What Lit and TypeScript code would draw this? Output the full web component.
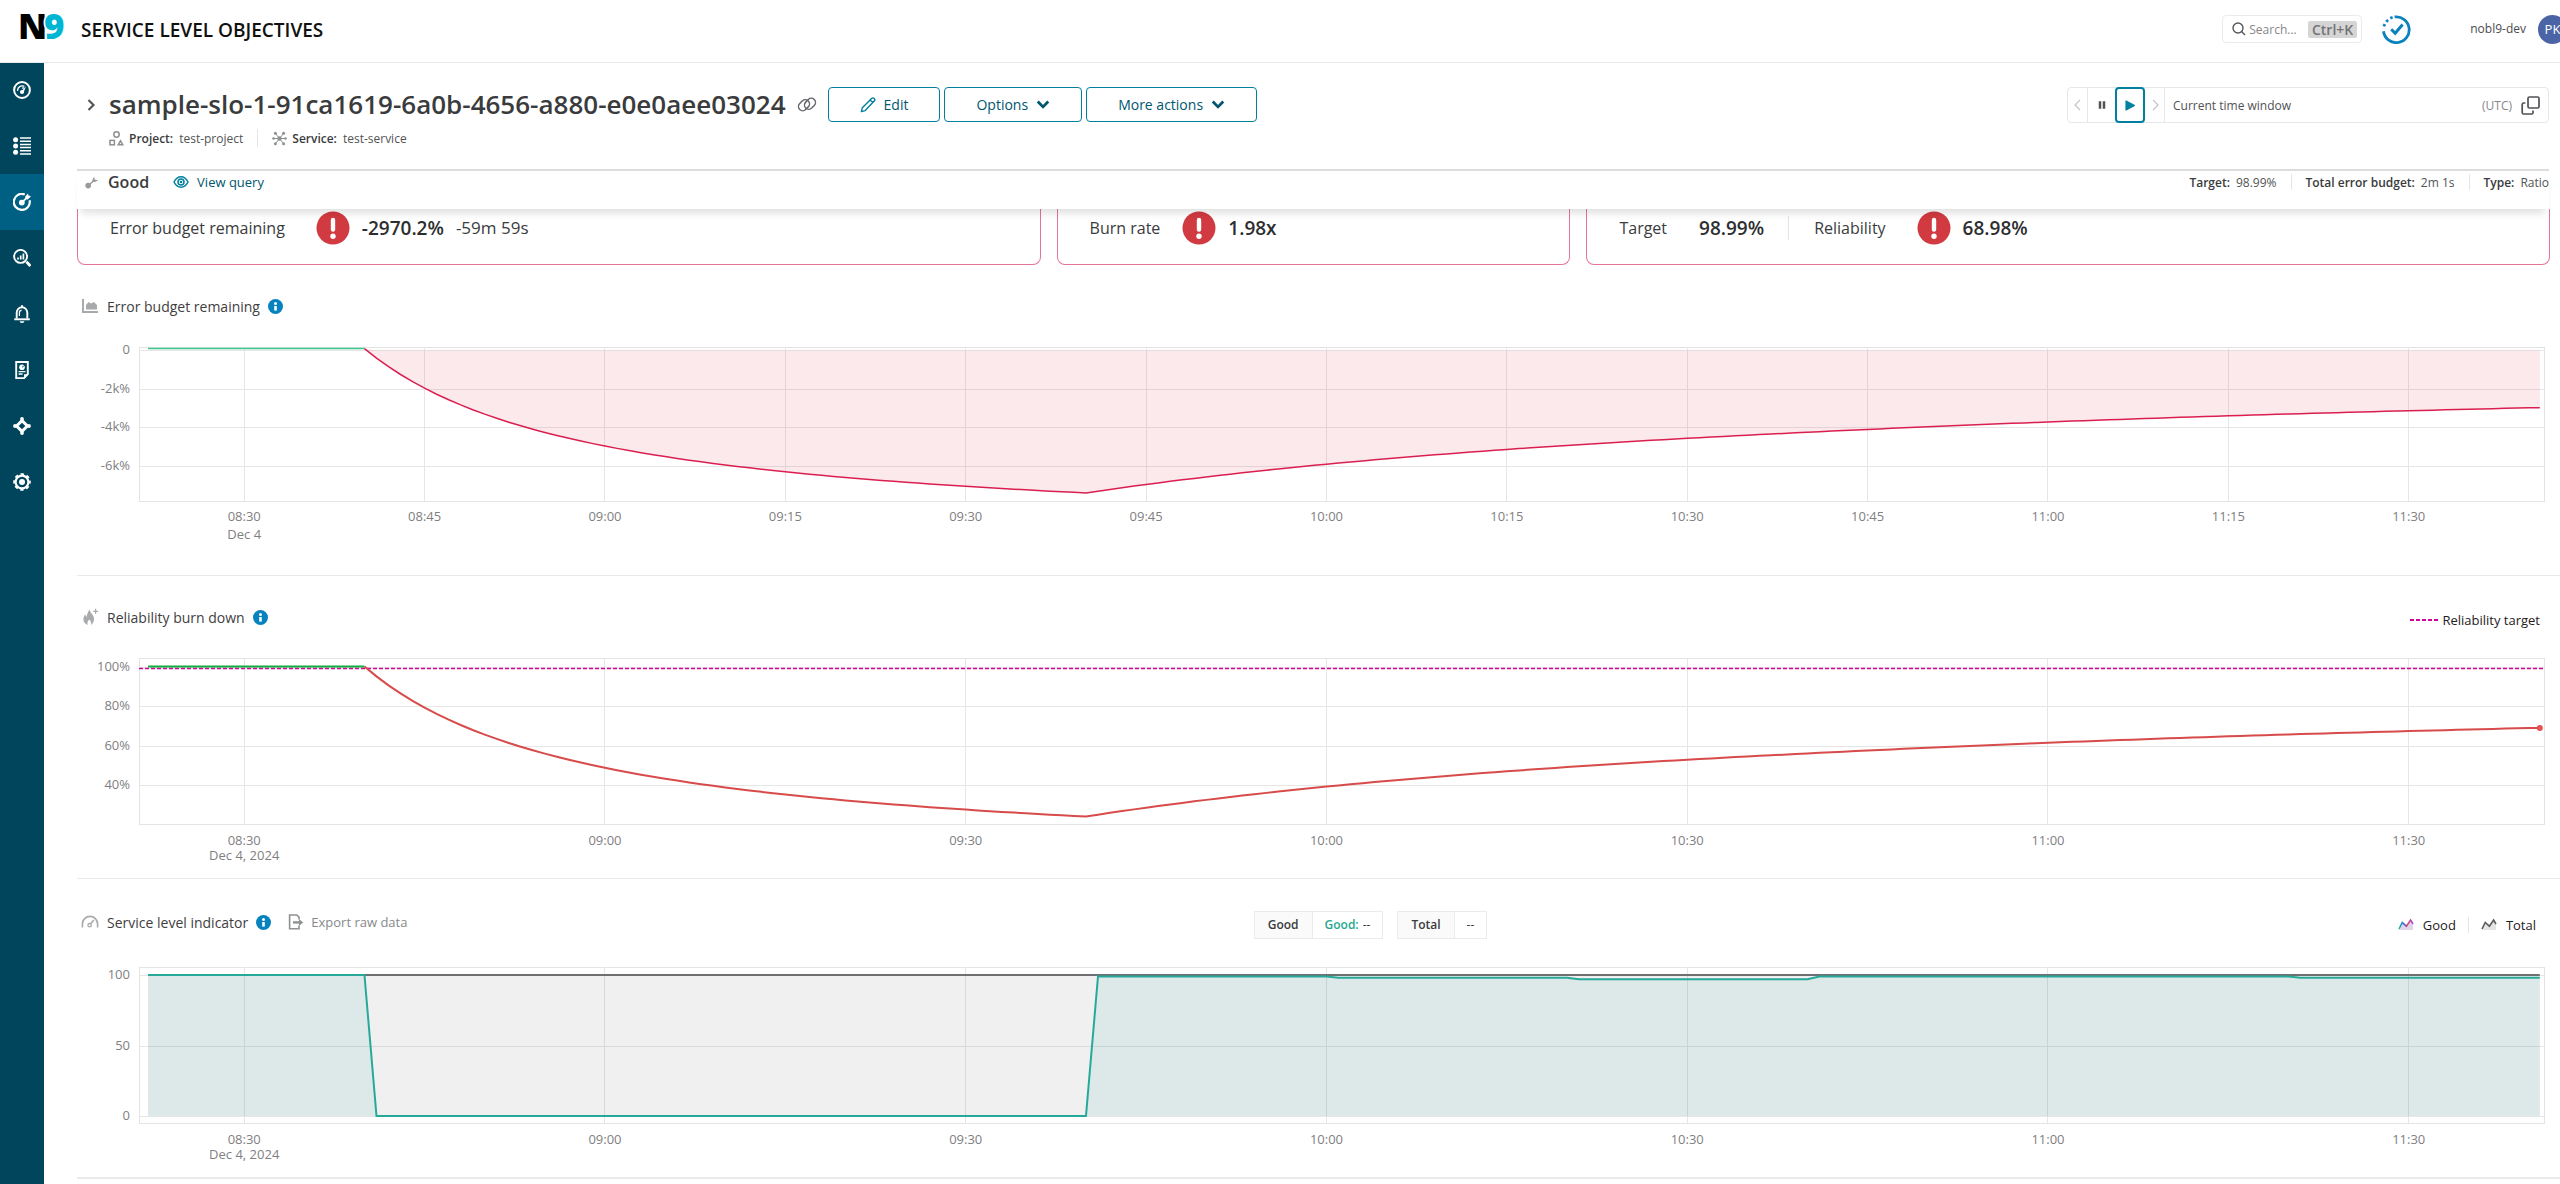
import { LitElement, html, svg, css, nothing } from "lit";
import { customElement, property } from "lit/decorators.js";

const START = 21.25;
const SPAN = 200;
const clock = (m: number) =>
  `${String(8 + Math.floor(m / 60)).padStart(2, "0")}:${String(m % 60).padStart(2, "0")}`;
const px = (m: number) => ((m - START) / SPAN) * 1000;
const pct = (m: number) => `${px(m) / 10}%`;

/* Share of good events recorded in each minute after 08:00. */
const goodAt = (m: number) => {
  if (m <= 40) return 100;
  if (m <= 100) return 0;
  if (m <= 120) return 99;
  if (m <= 140) return 98;
  if (m <= 160) return 97;
  if (m <= 200) return 99;
  return 98;
};

const minutes: number[] = [];
for (let m = 22; m <= 220; m++) minutes.push(m);
minutes.push(220.9);

const TARGET = 98.99;
const reliability = minutes.map((m) => {
  const total = m - 21;
  let good = 0;
  for (let k = 22; k <= m; k++) good += goodAt(k);
  return { m, v: good / Math.max(Math.floor(total), 1) };
});
const budget = reliability.map(({ m, v }) => ({ m, v: ((v - TARGET) / (100 - TARGET)) * 100 }));

type Point = { m: number; v: number };
const trace = (points: Point[], y: (v: number) => number) =>
  points.map((p, i) => `${i ? "L" : "M"}${px(p.m).toFixed(2)} ${y(p.v).toFixed(2)}`).join("");

const icons = {
  gauge: svg`<circle cx="9" cy="9" r="7.9" fill="none" stroke="currentColor" stroke-width="2"/><path d="M4.6 9.2a4.5 4.5 0 0 1 6.2-4" fill="none" stroke="currentColor" stroke-width="1.4" stroke-linecap="round"/><circle cx="9" cy="11" r="2.1" fill="currentColor"/><path d="M8.2 10.6 13 5.2 10.6 11.6z" fill="currentColor"/><path d="M9 7.2l2.2-.4" stroke="currentColor" stroke-width="1.2"/>`,
  list: svg`<circle cx="2.6" cy="2.8" r="2.5" fill="currentColor"/><circle cx="2.6" cy="9" r="2.5" fill="currentColor"/><circle cx="2.6" cy="15.2" r="2.5" fill="currentColor"/><path d="M7 1h11M7 4.2h11M7 7.4h11M7 10.6h11M7 13.8h11M7 17h11" stroke="currentColor" stroke-width="1.5"/>`,
  target: svg`<path d="M11.8 1.5A8 8 0 1 0 16.6 7.2" fill="none" stroke="currentColor" stroke-width="2.2"/><circle cx="8.8" cy="9.6" r="2.9" fill="currentColor"/><path d="M9 9.4 14 4.6" stroke="currentColor" stroke-width="1.8"/><path d="M12.2 3.6 15 .4l.5 2.2 2.5.6-3.2 3.2-2.3-.3z" fill="currentColor"/>`,
  analyze: svg`<circle cx="7.6" cy="7.4" r="6.5" fill="none" stroke="currentColor" stroke-width="1.9"/><path d="M5 8.4v2.2M7.7 6.4v4.2M10.4 4.6v6" stroke="currentColor" stroke-width="1.7"/><path d="M13.4 12.8l4 4.2" stroke="currentColor" stroke-width="2.8"/>`,
  bell: svg`<path d="M9 .2v2" stroke="currentColor" stroke-width="2"/><path d="M3.7 13.4V7.6a5.3 5.3 0 0 1 10.6 0v5.8" fill="none" stroke="currentColor" stroke-width="1.9"/><path d="M1.2 14.3h15.6" stroke="currentColor" stroke-width="1.9"/><path d="M6.4 11V8a2.7 2.7 0 0 1 2.2-2.8" fill="none" stroke="currentColor" stroke-width="1.2"/><path d="M6.6 16.2h4.8a2.4 1.8 0 0 1-4.8 0z" fill="currentColor"/>`,
  report: svg`<path d="M3.2 1h11.6v12.2L11 17.2H3.2z" fill="none" stroke="currentColor" stroke-width="1.9"/><path d="M11 17.6v-4.4h4.4z" fill="currentColor"/><circle cx="9" cy="6.3" r="2.8" fill="currentColor"/><path d="M9 6.3 12 4" stroke="#00455b" stroke-width=".9"/><path d="M5.6 10.6h6.8M5.6 13h4" stroke="currentColor" stroke-width="1.3"/>`,
  nodes: svg`<path d="M9 3.6 14.4 9 9 14.4 3.6 9z" fill="none" stroke="currentColor" stroke-width="3"/><circle cx="9" cy="2" r="1.9" fill="currentColor"/><circle cx="9" cy="16" r="1.9" fill="currentColor"/><circle cx="2" cy="9" r="1.9" fill="currentColor"/><circle cx="16" cy="9" r="1.9" fill="currentColor"/>`,
  gear: svg`<circle cx="9" cy="9" r="6.4" fill="none" stroke="currentColor" stroke-width="2.2"/><circle cx="9" cy="9" r="7.8" fill="none" stroke="currentColor" stroke-width="2" stroke-dasharray="3.4 2.73" stroke-dashoffset="1.7"/><circle cx="9" cy="9" r="3" fill="currentColor"/>`,
};

const icon = (body: unknown, size = 18, box = 18) =>
  html`<svg class="icon" aria-hidden="true" width=${size} height=${size} viewBox="0 0 ${box} ${box}">${body}</svg>`;

const caret = svg`<path d="M1.5 3 6 7.6 10.5 3" fill="none" stroke="currentColor" stroke-width="2.4"/>`;
const alertIcon = icon(
  svg`<circle cx="17" cy="17" r="16.5" fill="#d13a41"/><path d="M17 9v9.6" stroke="#fff" stroke-width="4.4" stroke-linecap="round"/><circle cx="17" cy="25.2" r="2.7" fill="#fff"/>`,
  34,
  34,
);

const base = css`
  * {
    box-sizing: border-box;
  }
  a {
    color: inherit;
    text-decoration: none;
  }
  button {
    font: inherit;
    color: inherit;
    background: none;
    border: 0;
    padding: 0;
    cursor: pointer;
  }
  .icon {
    display: block;
    flex: none;
  }
`;

@customElement("top-bar")
class TopBar extends LitElement {
  static styles = [
    base,
    css`
      :host {
        display: block;
      }
      .bar {
        display: flex;
        align-items: center;
        height: 63px;
        padding: 0 0 4px 20px;
        border-bottom: 1px solid #e9eaec;
        overflow: hidden;
      }
      .logo {
        display: block;
        overflow: visible;
      }
      .mark {
        font-family: "Open Sans", sans-serif;
        font-weight: 800;
        font-size: 35px;
      }
      h1 {
        margin: 1px 0 0 15px;
        font-size: 19px;
        line-height: 24px;
        font-weight: 600;
        color: #111;
        flex: 1;
        white-space: nowrap;
      }
      .search {
        display: flex;
        align-items: center;
        width: 140px;
        height: 28px;
        padding: 0 4px 0 9px;
        border: 1px solid #ebebed;
        border-radius: 4px;
        color: #55575a;
      }
      .search input {
        flex: 1;
        min-width: 0;
        margin-left: 3px;
        padding: 0;
        border: 0;
        outline: 0;
        font: inherit;
        font-size: 12px;
      }
      .search input::placeholder {
        color: #858789;
      }
      kbd {
        padding: 0 4px;
        border-radius: 2px;
        background: #d5d5d6;
        color: #737476;
        font: 600 14px/17px "Open Sans", sans-serif;
      }
      .done {
        margin: 0 59px 0 20px;
      }
      .org {
        font-size: 12px;
        line-height: 18px;
        color: #4a4b4d;
        margin: 0 12px 1px 0;
      }
      .avatar {
        flex: none;
        width: 29px;
        height: 29px;
        margin-right: -7px;
        border-radius: 50%;
        background: #4a64a6;
        color: #fff;
        font-size: 13px;
      }
    `,
  ];
  render() {
    return html`<header class="bar">
      <a href="#home" aria-label="N9">
        <svg class="logo" width="46" height="34" viewBox="0 0 46 34" aria-hidden="true">
          <text class="mark" x="-2" y="27" fill="#000">N</text>
          <text class="mark" x="24" y="27" fill="#00b6d3" stroke="#fff" stroke-width="3" paint-order="stroke">9</text>
        </svg>
      </a>
      <h1>SERVICE LEVEL OBJECTIVES</h1>
      <label class="search">
        ${icon(svg`<circle cx="6" cy="6" r="5" fill="none" stroke="currentColor" stroke-width="1.4"/><path d="M9.6 9.6 13 13" stroke="currentColor" stroke-width="1.4"/>`, 14, 14)}
        <input type="text" aria-label="Search" placeholder="Search..." />
        <kbd>Ctrl+K</kbd>
      </label>
      <button class="done" aria-label="Status">
        ${icon(svg`<path d="M13.3 1.9A12.9 12.9 0 1 1 1.4 15.6" fill="none" stroke="#0a82bd" stroke-width="2.8" transform="rotate(-3 14.5 14.5)"/><path d="M1.9 11.4 a13 13 0 0 1 .9 -2.3M4.3 6.8a13 13 0 0 1 1.8-1.8M8.3 3.3a13 13 0 0 1 2.3-.9" fill="none" stroke="#0a82bd" stroke-width="2.8"/><path d="M9.2 14.2l4 4L20.6 9.6" fill="none" stroke="#0a82bd" stroke-width="3"/>`, 29, 29)}
      </button>
      <span class="org">nobl9-dev</span>
      <button class="avatar">PK</button>
    </header>`;
  }
}

@customElement("side-nav")
class SideNav extends LitElement {
  static styles = [
    base,
    css`
      :host {
        display: block;
        width: 44px;
        background: #00455b;
      }
      nav {
        margin-top: -1px;
      }
      .link {
        display: flex;
        align-items: center;
        justify-content: center;
        height: 56px;
        color: #fff;
      }
      .link.on {
        background: #006084;
      }
    `,
  ];
  render() {
    const items: [string, unknown][] = [
      ["Dashboards", icons.gauge],
      ["Catalog", icons.list],
      ["Objectives", icons.target],
      ["Analysis", icons.analyze],
      ["Alerts", icons.bell],
      ["Reports", icons.report],
      ["Integrations", icons.nodes],
      ["Settings", icons.gear],
    ];
    return html`<nav>
      ${items.map(
        ([name, body], i) =>
          html`<a class="link ${i === 2 ? "on" : ""}" href="#${name.toLowerCase()}" aria-label=${name}>${icon(body)}</a>`,
      )}
    </nav>`;
  }
}

interface AxisLabel {
  y: number;
  text: string;
}

@customElement("time-chart")
class TimeChart extends LitElement {
  @property({ attribute: false }) plot = 154;
  @property({ attribute: false }) step = 30;
  @property({ attribute: false }) labels: AxisLabel[] = [];
  @property({ attribute: false }) dateText = "";
  @property({ attribute: false }) tickGap = 21;
  @property({ attribute: false }) dateGap = 15;
  @property({ attribute: false }) body: unknown = nothing;
  @property({ attribute: false }) overlay: unknown = nothing;
  @property({ attribute: false }) tall = 200;

  static styles = [
    base,
    css`
      :host {
        display: block;
        padding: 0 16px 0 62px;
      }
      .chart {
        display: block;
        width: 100%;
        overflow: visible;
      }
      .grid {
        stroke: #e6e6e7;
        shape-rendering: crispEdges;
      }
      .frame {
        fill: none;
        stroke: #e4e4e5;
        shape-rendering: crispEdges;
      }
      .tick {
        font: 12px "Open Sans", sans-serif;
        font-size: 13px;
        fill: #7f8082;
      }
      .mid {
        text-anchor: middle;
      }
      .end {
        text-anchor: end;
      }
      .series path {
        vector-effect: non-scaling-stroke;
      }
    `,
  ];
  render() {
    const ticks: number[] = [];
    for (let m = 30; m <= 210; m += this.step) ticks.push(m);
    return html`<svg class="chart" height=${this.tall}>
      <rect class="frame" x="0" y="0" width="100%" height=${this.plot} />
      ${this.labels.map(
        (l) => svg`<line class="grid" x1="0" x2="100%" y1=${l.y} y2=${l.y} />
          <text class="tick end" x="-9" y=${l.y + 4}>${l.text}</text>`,
      )}
      ${ticks.map(
        (m) => svg`<line class="grid" x1=${pct(m)} x2=${pct(m)} y1="0" y2=${this.plot} />
          <text class="tick mid" x=${pct(m)} y=${this.plot + this.tickGap}>${clock(m)}</text>`,
      )}
      <text class="tick mid" x=${pct(30)} y=${this.plot + this.tickGap + this.dateGap}>${this.dateText}</text>
      <svg class="series" width="100%" height=${this.plot} viewBox="0 0 1000 ${this.plot}" preserveAspectRatio="none">
        ${this.body}
      </svg>
      ${this.overlay}
    </svg>`;
  }
}

@customElement("app-root")
class AppRoot extends LitElement {
  static styles = [
    base,
    css`
      :host {
        display: block;
        min-height: 100vh;
        background: #fff;
        color: #3a3b3d;
        font-family: "Open Sans", sans-serif;
        overflow-x: clip;
      }
      .shell {
        display: flex;
        min-height: calc(100vh - 63px);
      }
      main {
        flex: 1;
        min-width: 0;
        padding: 24px 0 0 33px;
      }
      .top,
      .meta,
      .status,
      .facts,
      .title,
      .legend,
      .head,
      .stats,
      .card {
        display: flex;
        align-items: center;
      }
      .top {
        margin-right: 11px;
        height: 36px;
      }
      .expand {
        margin: 0 12px 0 8px;
      }
      h2 {
        margin: 0;
        padding-bottom: 3px;
        font-size: 26px;
        line-height: 32px;
        font-weight: 600;
        white-space: nowrap;
      }
      .copy {
        margin: 0 11px;
        color: #66686b;
      }
      .actions {
        display: flex;
        align-self: flex-start;
        gap: 4px;
        margin-right: auto;
      }
      .action {
        display: flex;
        align-items: center;
        justify-content: center;
        gap: 8px;
        height: 35px;
        padding: 0 31px;
        border: 1px solid #00809e;
        border-radius: 4px;
        color: #00566f;
        font-size: 14px;
        line-height: 20px;
        white-space: nowrap;
      }
      .window {
        display: flex;
        height: 36px;
        width: 482px;
        border: 1px solid #e6e7e9;
        border-radius: 4px;
        color: #505255;
      }
      .nav {
        display: grid;
        place-items: center;
        width: 19px;
        color: #c3c4c6;
      }
      .pause {
        width: 28px;
        border-left: 1px solid #e6e7e9;
        color: #505255;
      }
      .play {
        width: 30px;
        margin: -1px 0;
        border: 2px solid #00809e;
        border-radius: 4px;
        color: #00809e;
      }
      .range {
        display: flex;
        flex: 1;
        align-items: center;
        gap: 9px;
        padding: 0 8px;
        border-left: 1px solid #e6e7e9;
        font-size: 12px;
        text-align: left;
      }
      .range span:first-child {
        flex: 1;
      }
      .zone {
        color: #85878a;
      }
      .meta {
        margin: 6px 0 22px 32px;
        height: 18px;
        font-size: 12px;
        color: #515355;
      }
      .meta b,
      .facts b {
        margin: 0 6px 0 0;
        font-weight: 600;
        color: #3a3b3d;
      }
      .meta .icon {
        margin-right: 5px;
        color: #8d8f91;
      }
      .sep {
        align-self: stretch;
        width: 1px;
        margin: 0 14px;
        background: #e4e5e7;
      }
      .status {
        position: relative;
        z-index: 1;
        height: 40px;
        margin-right: 11px;
        padding: 0 0 16px 8px;
        border-top: 2px solid #dcdddf;
        background: #fff;
        box-shadow: 0 8px 8px -4px rgba(0, 0, 0, 0.13);
      }
      h3 {
        margin: 0 24px 0 10px;
        font-size: 16px;
        line-height: 22px;
        font-weight: 600;
      }
      .query {
        display: flex;
        align-items: center;
        gap: 8px;
        margin-right: auto;
        font-size: 13px;
        line-height: 18px;
        color: #00566f;
      }
      .facts {
        height: 16px;
        font-size: 12px;
        color: #515355;
      }
      .cards {
        display: grid;
        grid-template-columns: 15fr 8fr 15fr;
        gap: 16px;
        margin-right: 10px;
      }
      .card {
        height: 56px;
        padding: 0 32px 18px;
        border: 1px solid #e57595;
        border-top: 0;
        border-radius: 0 0 8px 8px;
        font-size: 16px;
        white-space: nowrap;
      }
      .card strong {
        font-size: 19px;
        font-weight: 600;
        color: #2d2e30;
      }
      .card .icon {
        margin: 0 12px 0 31px;
      }
      .card .near {
        margin-left: 22px;
        display: flex;
      }
      .card .near .icon {
        margin-left: 0;
      }
      .card .time {
        margin-left: 12px;
        font-size: 17px;
      }
      .card .value {
        margin-left: 32px;
      }
      .card .sep {
        height: 24px;
        align-self: center;
        margin: 0 25px 0 24px;
      }
      section {
        padding: 30px 0 16px;
        border-bottom: 1px solid #e9eaeb;
      }
      .head {
        align-items: flex-start;
        justify-content: space-between;
        height: 28px;
        margin-bottom: 24px;
        padding: 0 15px 0 4px;
      }
      .indicator {
        padding-top: 32px;
        border-bottom-width: 2px;
      }
      .indicator .head {
        margin-bottom: 28px;
      }
      .title {
        flex: 1;
        height: 22px;
        gap: 8px;
        color: #a9aaac;
      }
      .title h4 {
        margin: 0;
        font-size: 14px;
        font-weight: 400;
        color: #3f4042;
      }
      .export {
        display: flex;
        align-items: center;
        gap: 7px;
        margin-left: 9px;
        font-size: 13px;
        color: #87898b;
      }
      .legend {
        flex: 1;
        justify-content: flex-end;
        height: 28px;
        padding-right: 5px;
        font-size: 13px;
        color: #1f2022;
        gap: 4px;
      }
      .legend.wide {
        gap: 9px;
        padding-right: 9px;
      }
      .legend .sep {
        height: 16px;
        align-self: center;
        margin: 0 3px;
      }
      .stats {
        gap: 14px;
        margin-left: 124px;
        font-size: 12px;
        line-height: 26px;
      }
      .stat {
        display: flex;
        border: 1px solid #ebebec;
      }
      .stat b {
        padding: 0 13px;
        background: #fafafa;
        border-right: 1px solid #ebebec;
        font-weight: 600;
      }
      .stat span {
        padding: 0 12px;
      }
      .stat .good {
        padding-right: 0;
        color: #27a791;
        font-weight: 600;
      }
      .stat .good + span {
        padding-left: 4px;
      }
    `,
  ];

  private head(title: string, glyph: unknown, after: unknown = nothing, rest: unknown = nothing) {
    return html`<div class="head">
      <div class="title">
        ${icon(glyph, 18, 18)}
        <h4>${title}</h4>
        <button aria-label="About ${title}">
          ${icon(svg`<circle cx="7.5" cy="7.5" r="7.5" fill="#0683be"/><circle cx="7.5" cy="4.6" r="1.5" fill="#fff"/><path d="M7.5 7v4.6" stroke="#fff" stroke-width="2.6"/>`, 15, 15)}
        </button>
        ${after}
      </div>
      ${rest}
    </div>`;
  }

  private budgetChart() {
    const y = (v: number) => 3.5 - (v / 1000) * 19.2;
    const below = budget.filter((p) => p.m >= 40);
    const line = trace(below, y);
    const flat = trace(budget.filter((p) => p.m <= 40), y);
    return html`<time-chart
      .plot=${154}
      .tall=${212}
      .step=${15}
      .dateText=${"Dec 4"}
      .tickGap=${20}
      .dateGap=${18}
      .labels=${[0, 2, 4, 6].map((k) => ({ y: Math.round(3 + k * 19.25), text: k ? `-${k}k%` : "0" }))}
      .body=${svg`
        <path d="${line}V3.5H${px(41)}Z" fill="#dc2846" fill-opacity=".1" />
        <path d=${flat} fill="none" stroke="#3cc78f" stroke-width="1.5" />
        <path d=${line} fill="none" stroke="#da1f50" stroke-width="1.5" />`}
    ></time-chart>`;
  }

  private reliabilityChart() {
    const y = (v: number) => 8.5 + (100 - v) * 1.975;
    const last = reliability[reliability.length - 1];
    return html`<time-chart
      .plot=${166}
      .tall=${204}
      .dateText=${"Dec 4, 2024"}
      .labels=${[100, 80, 60, 40].map((v) => ({ y: Math.round(y(v)), text: `${v}%` }))}
      .body=${svg`
        <path d="M0 10.5H1000" fill="none" stroke="#d6009a" stroke-width="1.6" stroke-dasharray="4 2" />
        <path d=${trace(reliability.filter((p) => p.m <= 40), y)} fill="none" stroke="#13ab3f" stroke-width="1.8" />
        <path d=${trace(reliability.filter((p) => p.m >= 40), y)} fill="none" stroke="#d84b4b" stroke-width="2" />`}
      .overlay=${svg`<circle cx=${pct(last.m)} cy=${y(last.v)} r="3" fill="#e65252" />`}
    ></time-chart>`;
  }

  private indicatorChart() {
    const y = (v: number) => 149 - v * 1.41;
    const series = minutes.map((m) => ({ m, v: goodAt(m) }));
    const line = trace(series, y);
    const left = px(22);
    const right = px(220.9);
    return html`<time-chart
      .plot=${156}
      .tall=${194}
      .dateText=${"Dec 4, 2024"}
      .labels=${[100, 50, 0].map((v) => ({ y: Math.round(y(v)), text: `${v}` }))}
      .body=${svg`
        <path d="M${left} 8H${right}V149H${left}Z" fill="#6b6b6b" fill-opacity=".1" />
        <path d="${line}V149H${left}Z" fill="#1fa896" fill-opacity=".09" />
        <path d="M${left} 8H${right}" fill="none" stroke="#6e6f71" stroke-width="2" />
        <path d=${line} fill="none" stroke="#27a999" stroke-width="2" />`}
    ></time-chart>`;
  }

  render() {
    return html`
      <top-bar></top-bar>
      <div class="shell">
        <side-nav></side-nav>
        <main>
          <div class="top">
            <button class="expand" aria-label="Expand details">
              ${icon(svg`<path d="M3.5 1l5 5-5 5" fill="none" stroke="#55575a" stroke-width="2.2"/>`, 12, 12)}
            </button>
            <h2>sample-slo-1-91ca1619-6a0b-4656-a880-e0e0aee03024</h2>
            <button class="copy" aria-label="Copy link">
              ${icon(svg`<g fill="none" stroke="currentColor" stroke-width="1.5"><rect x="1" y="6" width="12" height="8.4" rx="4.2" transform="rotate(-45 7 10.2)"/><rect x="7" y="4.600" width="12" height="8.4" rx="4.2" transform="rotate(-45 13 8.800)"/></g>`, 20, 20)}
            </button>
            <div class="actions">
              <button class="action">
                ${icon(svg`<path d="M1.4 14.6l.9-3.9L11.6 1.4a1.7 1.7 0 0 1 2.6 2.6L5.2 13.6z M10 3l2.8 2.6" fill="none" stroke="#00809e" stroke-width="1.4" stroke-linejoin="round"/>`, 16, 16)}
                Edit
              </button>
              <button class="action">Options ${icon(caret, 14, 12)}</button>
              <button class="action">More actions ${icon(caret, 14, 12)}</button>
            </div>
            <div class="window">
              <button class="nav" aria-label="Previous window">${icon(svg`<path d="M8 1 3 6l5 5" fill="none" stroke="currentColor" stroke-width="1.2"/>`, 12, 12)}</button>
              <button class="nav pause" aria-label="Pause">${icon(svg`<path d="M3.6 1.5v9M8.4 1.5v9" stroke="currentColor" stroke-width="3"/>`, 10, 12)}</button>
              <button class="nav play" aria-label="Play">${icon(svg`<path d="M1 .8v10.4L10.8 6z" fill="currentColor" stroke="currentColor"/>`, 11, 12)}</button>
              <button class="nav" aria-label="Next window">${icon(svg`<path d="M4 1l5 5-5 5" fill="none" stroke="currentColor" stroke-width="1.2"/>`, 12, 12)}</button>
              <button class="range">
                <span>Current time window</span><span class="zone">(UTC)</span>
                ${icon(svg`<rect x="7" y="1" width="11" height="11" rx="1.4" fill="none" stroke="currentColor" stroke-width="1.7"/><path d="M4.4 7H2.6A1.4 1.4 0 0 0 1.2 8.400V16.600A1.400 1.400 0 0 0 2.600 18H10.600A1.400 1.400 0 0 0 12 16.600V14.600" fill="none" stroke="currentColor" stroke-width="1.7"/>`, 19, 19)}
              </button>
            </div>
          </div>
          <div class="meta">
            ${icon(svg`<g fill="none" stroke="currentColor" stroke-width="1.500"><circle cx="7.500" cy="3.500" r="2.700"/><rect x="1" y="9.400" width="4.400" height="4.400"/><path d="M9.200 13.800h4.600L11.500 9.800z"/></g>`, 15, 15)}
            <b>Project:</b><a href="#project">test-project</a>
            <span class="sep"></span>
            ${icon(svg`<g stroke="currentColor"><path d="M7.500 7.500 3.500 2.500M7.500 7.500l4-5M7.500 7.500l-4 5M7.500 7.500l4 5M2 7.500h11" stroke-width="1"/></g><g fill="currentColor"><circle cx="7.500" cy="7.500" r="2.200"/><circle cx="3.400" cy="2.200" r="1.500"/><circle cx="11.600" cy="2.200" r="1.500"/><circle cx="3.400" cy="12.800" r="1.500"/><circle cx="11.600" cy="12.800" r="1.500"/><circle cx="1.500" cy="7.500" r="1.300"/><circle cx="13.500" cy="7.500" r="1.300"/></g>`, 15, 15)}
            <b>Service:</b><a href="#service">test-service</a>
          </div>
          <div class="status">
            ${icon(svg`<g fill="#97999b"><circle cx="3.200" cy="9.600" r="2.800"/><path d="M7.400 3.800 9.200.4l.4 3.200 3.600.8-3.400 1.700-2.600-.2z"/></g><path d="M5 8 8 5.300" stroke="#97999b" stroke-width="1.400"/>`, 13, 13)}
            <h3>Good</h3>
            <button class="query">
              ${icon(svg`<g fill="none" stroke="#00809e" stroke-width="1.500"><path d="M1 8s2.600-5.200 7-5.200S15 8 15 8s-2.600 5.200-7 5.200S1 8 1 8z"/><circle cx="8" cy="8" r="3"/></g><circle cx="8" cy="8" r="1.300" fill="#00809e"/>`, 16, 16)}
              View query
            </button>
            <div class="facts">
              <b>Target:</b>98.99%<span class="sep"></span><b>Total error budget:</b>2m 1s<span class="sep"></span><b>Type:</b>Ratio
            </div>
          </div>
          <div class="cards">
            <div class="card">
              Error budget remaining ${alertIcon}<strong>-2970.2%</strong><span class="time">-59m 59s</span>
            </div>
            <div class="card">Burn rate <span class="near">${alertIcon}</span><strong>1.98x</strong></div>
            <div class="card">
              Target <strong class="value">98.99%</strong><span class="sep"></span>Reliability
              ${alertIcon}<strong>68.98%</strong>
            </div>
          </div>
          <section>
            ${this.head(
              "Error budget remaining",
              svg`<path d="M2 2v13h15" fill="none" stroke="currentColor" stroke-width="2"/><path d="M5 12.500V8l2.600-3 2.400 1.600L13 5l3 3v4.500z" fill="currentColor"/>`,
            )}
            ${this.budgetChart()}
          </section>
          <section>
            ${this.head(
              "Reliability burn down",
              svg`<path d="M8.600 1.800c.6 3.200 4.400 4.900 4.400 9.200 0 2.700-1.300 4.800-2.900 6 .7-2.400-.3-4.200-1.800-5.600-1.200 1.400-2.400 3-1.600 5.600C4.200 15.900 2.400 14 2.400 11.200c0-2 .9-3.700 2-5 .1 1.200.4 2.100 1.200 2.700C6 6.500 6.800 3.800 8.600 1.800z" fill="currentColor"/><path d="M14.600.8v5M12.100 3.300h5" stroke="currentColor" stroke-width="1.200"/>`,
              nothing,
              html`<div class="legend">
                <svg width="28" height="4" aria-hidden="true"><path d="M0 2h28" stroke="#d6009a" stroke-width="2" stroke-dasharray="4 2" /></svg>
                Reliability target
              </div>`,
            )}
            ${this.reliabilityChart()}
          </section>
          <section class="indicator">
            ${this.head(
              "Service level indicator",
              svg`<path d="M1.400 14.600V11a7.600 7.600 0 0 1 15.200 0v3.600" fill="none" stroke="currentColor" stroke-width="1.600"/><circle cx="8.600" cy="12.200" r="1.700" fill="none" stroke="currentColor" stroke-width="1.300"/><path d="M9.600 10.800 12.800 7" stroke="currentColor" stroke-width="1.500"/>`,
              html`<button class="export">
                ${icon(svg`<path d="M11 5.500V3.200L8.800 1H1.600v13.800H11v-3.300" fill="none" stroke="#8f9193" stroke-width="1.600"/><path d="M5 8.400h7" stroke="#8f9193" stroke-width="2.400"/><path d="M11 4.900 15.200 8.400 11 11.900z" fill="#8f9193"/>`, 16, 16)}
                Export raw data
              </button>`,
              html`<div class="stats">
                  <div class="stat"><b>Good</b><span class="good">Good:</span><span>--</span></div>
                  <div class="stat"><b>Total</b><span>--</span></div>
                </div>
                <div class="legend wide">
                  ${icon(svg`<defs><linearGradient id="tone"><stop offset="0" stop-color="#14c2a3"/><stop offset=".35" stop-color="#3c62d8"/><stop offset=".65" stop-color="#e0456f"/><stop offset="1" stop-color="#9d58e0"/></linearGradient></defs><path d="M1 13V11L4 5.500 8 9l5.500-6L15 7v6z" fill="#e2d5ea"/><path d="M1 12 4.200 5.500 8.400 9.200 12.600 3 15 7" fill="none" stroke="url(#tone)" stroke-width="1.600"/>`, 16, 16)}
                  Good<span class="sep"></span>
                  ${icon(svg`<path d="M1 13V11L4 5.500 8 9l5.500-6L15 7v6z" fill="#e4e4e4"/><path d="M1 12 4.200 5.500 8.400 9.200 12.600 3 15 7" fill="none" stroke="#5c5d5f" stroke-width="1.600"/>`, 16, 16)}
                  Total
                </div>`,
            )}
            ${this.indicatorChart()}
          </section>
        </main>
      </div>
    `;
  }
}
